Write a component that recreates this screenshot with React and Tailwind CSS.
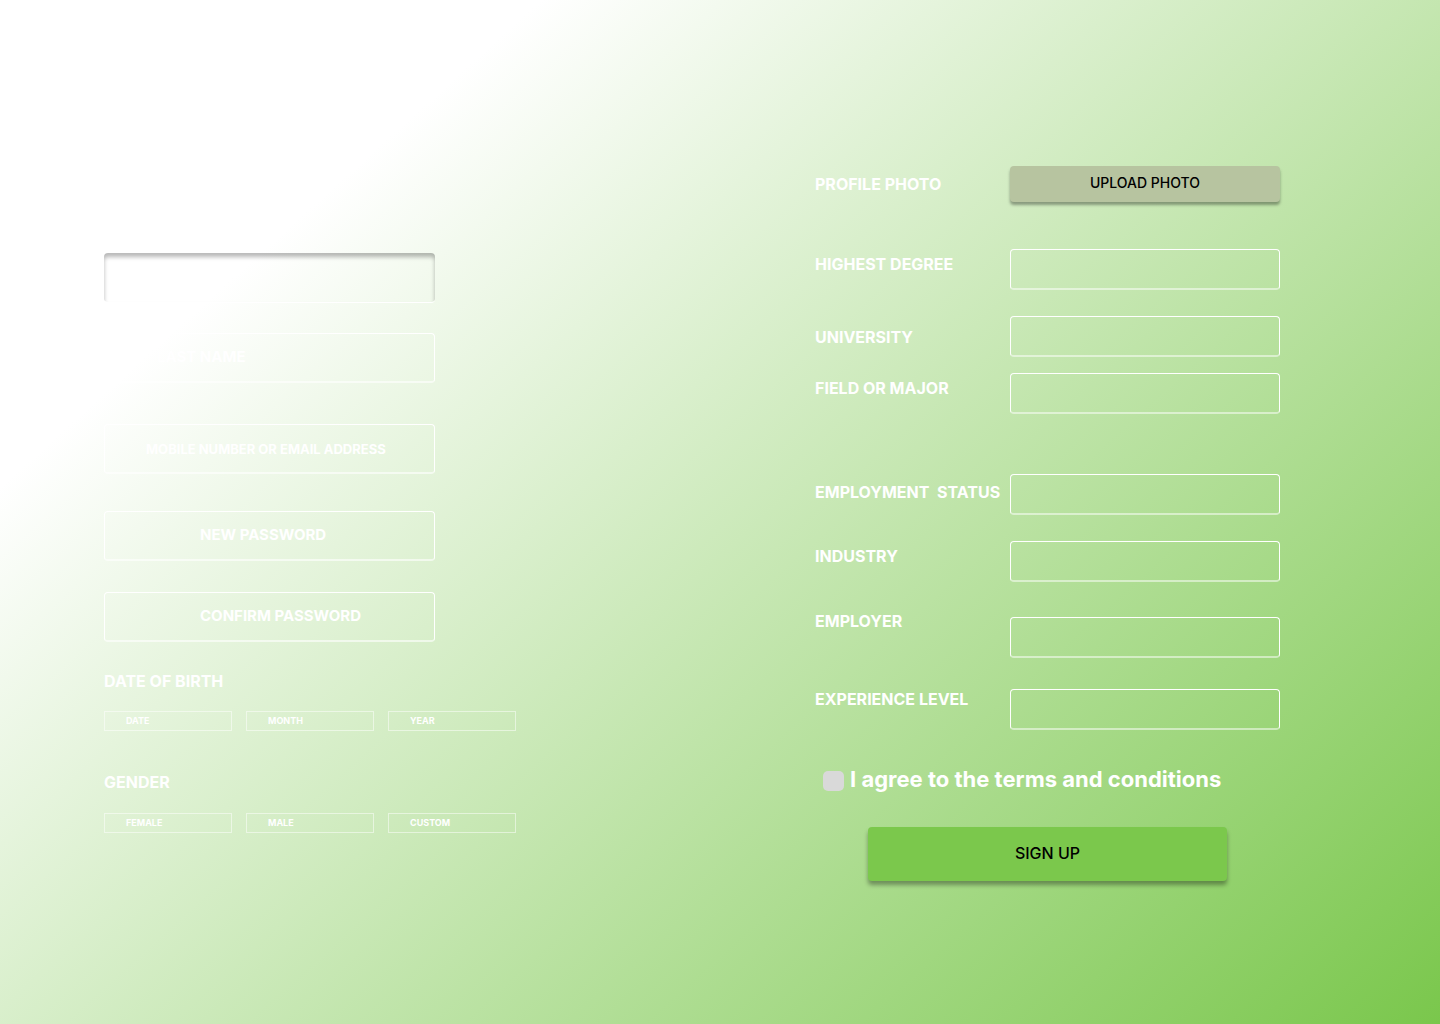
import React from "react";

const accountFields = [
  {
    id: "first-name",
    label: "First name",
    type: "text",
    box: "border-b shadow-[inset_0_4px_4px_rgba(0,0,0,0.28)]",
  },
  {
    id: "last-name",
    label: "Last name",
    type: "text",
    placeholder: "LAST NAME",
    box: "mt-[30px] border border-b-2 border-b-white/60 pl-[52px] pb-0.5 text-[15px]",
  },
  {
    id: "contact",
    label: "Mobile number or email address",
    type: "text",
    placeholder: "MOBILE NUMBER OR EMAIL ADDRESS",
    box: "mt-[41px] border border-b-2 border-b-white/60 pl-[41px] text-[13px]",
  },
  {
    id: "new-password",
    label: "New password",
    type: "password",
    placeholder: "NEW PASSWORD",
    box: "mt-[37px] border border-b-2 border-b-white/60 pl-[95px] pb-0.5 text-[15px]",
  },
  {
    id: "confirm-password",
    label: "Confirm password",
    type: "password",
    placeholder: "CONFIRM PASSWORD",
    box: "mt-[31px] border border-b-2 border-b-white/60 pl-[95px] pb-0.5 text-[15px]",
  },
];

const profileFields = [
  { id: "degree", label: "HIGHEST DEGREE", row: "mt-[47px] items-start", text: "pt-[5px]", box: "" },
  { id: "university", label: "UNIVERSITY", row: "mt-[26px] items-center", text: "", box: "" },
  { id: "major", label: "FIELD OR MAJOR", row: "mt-4 items-start", text: "pt-[5px]", box: "" },
  { id: "status", label: "EMPLOYMENT  STATUS", row: "mt-[60px] items-start", text: "pt-2", box: "" },
  { id: "industry", label: "INDUSTRY", row: "mt-[26px] items-start", text: "pt-[5px]", box: "" },
  { id: "employer", label: "EMPLOYER", row: "mt-[29px] items-start", text: "", box: "mt-1.5" },
  { id: "experience", label: "EXPERIENCE LEVEL", row: "mt-[31px] items-start", text: "", box: "" },
];

const smallBox =
  "h-5 w-full appearance-none border border-white/50 bg-transparent pl-[21px] text-left text-[9px] leading-4 font-bold text-white";

function AccountSection() {
  return (
    <section className="lg:pt-[253px]">
      <div className="max-w-[331px]">
        {accountFields.map((f) => (
          <input
            key={f.id}
            id={f.id}
            type={f.type}
            aria-label={f.label}
            placeholder={f.placeholder}
            className={`block h-[50px] w-full rounded-[4px] border-white bg-transparent font-bold text-white outline-none placeholder:text-white ${f.box}`}
          />
        ))}
      </div>

      <fieldset className="mt-[29px]">
        <legend className="text-base leading-5 font-bold">DATE OF BIRTH</legend>
        <div className="mt-5 grid grid-cols-3 gap-[14px]">
          {["DATE", "MONTH", "YEAR"].map((name) => (
            <select key={name} aria-label={name} className={smallBox}>
              <option>{name}</option>
            </select>
          ))}
        </div>
      </fieldset>

      <fieldset className="mt-[41px]">
        <legend className="text-base leading-5 font-bold">GENDER</legend>
        <div className="mt-[21px] grid grid-cols-3 gap-[14px]">
          {["FEMALE", "MALE", "CUSTOM"].map((name) => (
            <button key={name} type="button" className={smallBox}>
              {name}
            </button>
          ))}
        </div>
      </fieldset>
    </section>
  );
}

function ProfileSection() {
  return (
    <section className="lg:pt-[166px]">
      <div className="grid grid-cols-[195fr_270fr] items-center">
        <span id="photo-label" className="text-base leading-5 font-bold">
          PROFILE PHOTO
        </span>
        <button
          type="button"
          aria-describedby="photo-label"
          className="h-9 rounded-[4px] bg-[#b7c4a0] pb-0.5 text-sm font-medium text-black shadow-[0_3px_3px_rgba(0,0,0,0.35)]"
        >
          UPLOAD PHOTO
        </button>
      </div>

      {profileFields.map((f) => (
        <div key={f.id} className={`grid grid-cols-[195fr_270fr] ${f.row}`}>
          <label
            htmlFor={f.id}
            className={`text-base leading-5 font-bold whitespace-pre ${f.text}`}
          >
            {f.label}
          </label>
          <input
            id={f.id}
            type="text"
            className={`h-[41px] w-full min-w-0 rounded-[4px] border border-b-2 border-white border-b-white/50 bg-transparent px-3 text-sm text-white outline-none ${f.box}`}
          />
        </div>
      ))}

      <div className="mt-[39px] ml-2 flex items-start gap-1.5">
        <input
          id="terms"
          type="checkbox"
          className="mt-0.5 h-5 w-[21px] shrink-0 appearance-none rounded-[5px] bg-[#d9d9d9] checked:bg-[#7bc84c]"
        />
        <label htmlFor="terms" className="text-[22px] leading-5 font-bold">
          I agree to the terms and conditions
        </label>
      </div>

      <button
        type="submit"
        className="mx-[53px] mt-9 block h-[54px] w-[calc(100%-106px)] rounded-[4px] bg-[#7bc84c] pb-0.5 text-base font-medium text-black shadow-[0_4px_4px_rgba(0,0,0,0.35)]"
      >
        SIGN UP
      </button>
    </section>
  );
}

export default function App() {
  return (
    <form
      onSubmit={(e) => e.preventDefault()}
      className="grid min-h-screen content-start gap-12 bg-[linear-gradient(138deg,#ffffff_21%,#7ac74c_100%)] px-6 py-12 font-['Inter',sans-serif] text-white lg:grid-cols-[412fr_465fr] lg:gap-[299px] lg:py-0 lg:pr-40 lg:pl-[104px]"
    >
      <AccountSection />
      <ProfileSection />
    </form>
  );
}
